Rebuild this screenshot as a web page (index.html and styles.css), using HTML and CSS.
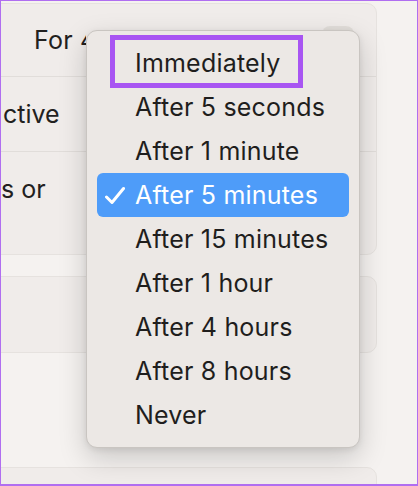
FILE: index.html
```html
<!DOCTYPE html>
<html>
<head>
<meta charset="utf-8">
<link rel="stylesheet" href="styles.css">
</head>
<body>
<div class="frame">
  <div class="cards">
    <div class="card card-main">
      <div class="row row-first">
        <span class="value">For 4 minutes</span>
        <span class="popup"></span>
      </div>
      <div class="row row-second">
        <span class="label">ctive</span>
      </div>
      <div class="row row-third">
        <span class="label">s or</span>
      </div>
    </div>
    <div class="card card-small"></div>
    <div class="card card-last"></div>
  </div>

  <div class="menu">
    <div class="item">Immediately</div>
    <div class="item">After 5 seconds</div>
    <div class="item">After 1 minute</div>
    <div class="item selected">
      <svg class="check" width="20" height="20" viewBox="0 0 20 20"><path d="M1.5 11 L7 16.5 L18.5 2.5" fill="none" stroke="#fff" stroke-width="3" stroke-linecap="round" stroke-linejoin="round"/></svg>
      After 5 minutes
    </div>
    <div class="item">After 15 minutes</div>
    <div class="item">After 1 hour</div>
    <div class="item">After 4 hours</div>
    <div class="item">After 8 hours</div>
    <div class="item">Never</div>
  </div>

  <div class="annotation"></div>
</div>
</body>
</html>
```

FILE: styles.css
```css
html, body {
  margin: 0;
  padding: 0;
}
body {
  background: #f5f1ef;
  font-family: Inter, "Noto Sans", sans-serif;
  color: #222120;
}
.frame {
  position: relative;
  width: 418px;
  height: 486px;
  overflow: hidden;
  background: #f5f2f0;
}
.frame::after {
  content: "";
  position: absolute;
  inset: 0;
  border: 1px solid #b06ef0;
  border-bottom-width: 2px;
  pointer-events: none;
}
.cards {
  display: flex;
  flex-direction: column;
  width: 389px;
  margin-left: -12px;
  padding-top: 3px;
}
.card {
  background: #f0ecea;
  border: 1px solid #e6e2df;
  border-radius: 10px;
  box-sizing: border-box;
}
.card-main {
  height: 252px;
}
.card-small {
  margin-top: 21px;
  height: 77px;
}
.card-last {
  margin-top: 114px;
  height: 60px;
}
.row {
  display: flex;
  align-items: center;
  box-sizing: border-box;
  font-size: 25px;
}
.row + .row {
  border-top: 1px solid #e1ddda;
}
.row-first {
  height: 72px;
  padding-left: 45px;
}
.row-first .value {
  letter-spacing: 0.2px;
  width: 52px;
  overflow: hidden;
  white-space: nowrap;
}
.popup {
  margin-left: auto;
  margin-right: 22px;
  width: 32px;
  height: 28px;
  border-radius: 8px;
  background: #e2deda;
  align-self: flex-start;
  margin-top: 22px;
}
.row-second {
  height: 75px;
  padding-left: 14px;
}
.row-third {
  height: 104px;
  align-items: flex-start;
  padding-left: 12px;
  padding-top: 22px;
}
.menu {
  position: absolute;
  left: 86px;
  top: 30px;
  width: 274px;
  box-sizing: border-box;
  padding: 10px 10px;
  background: #ece8e5;
  border: 1px solid #c9c5c1;
  border-radius: 11px;
  box-shadow: 0 10px 28px rgba(0, 0, 0, 0.18), 0 2px 6px rgba(0, 0, 0, 0.08);
  display: flex;
  flex-direction: column;
}
.item {
  position: relative;
  height: 44px;
  display: flex;
  align-items: center;
  padding-left: 38px;
  font-size: 25px;
  letter-spacing: 0.2px;
  color: #1f1e1d;
  border-radius: 6px;
}
.item.selected {
  background: #4e9cf9;
  color: #ffffff;
}
.check {
  position: absolute;
  left: 8px;
  top: 13px;
}
.annotation {
  position: absolute;
  left: 110px;
  top: 35px;
  width: 193px;
  height: 53px;
  box-sizing: border-box;
  border: 5px solid #a855f2;
}
```
